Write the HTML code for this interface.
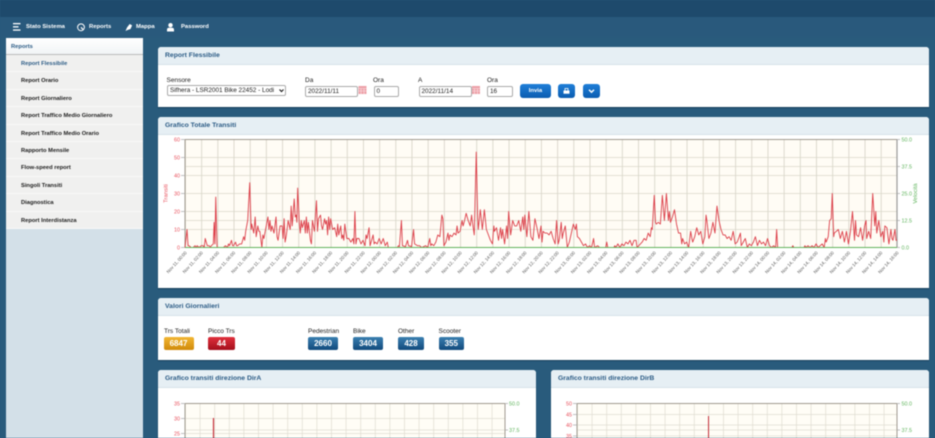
<!DOCTYPE html>
<html lang="it"><head><meta charset="utf-8"><title>Report Flessibile</title>
<style>
*{box-sizing:border-box}
html,body{margin:0;padding:0;width:935px;height:438px;overflow:hidden;background:#295b7c}
body{font-family:"Liberation Sans",sans-serif;font-size:6px;color:#222}
#w{position:relative;width:935px;height:438px;overflow:hidden;background:#295b7c;filter:blur(.4px)}
#top{position:absolute;left:0;top:0;width:935px;height:17px;background:#1e4a6c}
#nav{position:absolute;left:0;top:17px;width:935px;height:20px;background:#29597c}
.n{position:absolute;top:24px;color:#fff;font-weight:bold;font-size:5.9px;line-height:7px;white-space:nowrap}
#col{position:absolute;left:6px;top:37.5px;width:137px;height:401px;background:#d3e0e8}
#sh{height:17.5px;background:linear-gradient(#fff,#f1f4f6);border-bottom:1px solid #bbb;padding-left:5px;font-weight:bold;font-size:5.8px;line-height:19px;color:#2b5b85}
.i{height:17.4px;background:#f0f0ef;border-bottom:1px solid #f8f8f8;padding-left:15px;font-weight:bold;font-size:5.75px;line-height:19.5px;color:#1c1c1c;white-space:nowrap}
.p{position:absolute;background:#fff;border-radius:3px 3px 0 0;box-shadow:0 1px 1px #173f5c}
.h{height:18px;background:#e6eff4;border-bottom:1px solid #d6e2e8;border-radius:3px 3px 0 0;padding-left:7px;font-weight:bold;font-size:6.8px;line-height:17px;color:#2b5b85;white-space:nowrap}
.l{position:absolute;font-size:6.5px;line-height:7px;color:#222;white-space:nowrap}
.f{position:absolute;height:11px;background:#fff;border:1px solid #aaa;border-radius:2px;font-size:6.4px;line-height:9px;padding-left:2px;color:#222;white-space:nowrap}
.b{position:absolute;top:84px;height:14px;border-radius:3px;background:linear-gradient(#1f7fd8,#0a5cb0);color:#fff;font-weight:bold;font-size:5.9px;line-height:14.5px;text-align:center}
.t{position:absolute;top:337px;height:13px;border-radius:2px;color:#fff;font-weight:bold;font-size:8px;line-height:13px;text-align:center;background:linear-gradient(#3a7fb0,#114a7c)}
svg{position:absolute;left:0;top:0}
svg text{font-family:"Liberation Sans",sans-serif}
</style></head><body><div id="w">
<div id="top"></div><div id="nav"></div>
<div class="n" style="left:26px">Stato Sistema</div>
<div class="n" style="left:89px">Reports</div>
<div class="n" style="left:136px">Mappa</div>
<div class="n" style="left:181px">Password</div>

<div id="col"><div id="sh">Reports</div>
<div class="i" style="color:#2b5b85">Report Flessibile</div>
<div class="i">Report Orario</div>
<div class="i">Report Giornaliero</div>
<div class="i">Report Traffico Medio Giornaliero</div>
<div class="i">Report Traffico Medio Orario</div>
<div class="i">Rapporto Mensile</div>
<div class="i">Flow-speed report</div>
<div class="i">Singoli Transiti</div>
<div class="i">Diagnostica</div>
<div class="i">Report Interdistanza</div>
</div>

<div class="p" style="left:158px;top:47px;width:771px;height:60px"><div class="h">Report Flessibile</div></div>
<div class="p" style="left:158px;top:116.5px;width:771px;height:171.5px"><div class="h">Grafico Totale Transiti</div></div>
<div class="p" style="left:158px;top:298px;width:771px;height:62px"><div class="h">Valori Giornalieri</div></div>
<div class="p" style="left:158px;top:370px;width:378px;height:70px"><div class="h">Grafico transiti direzione DirA</div></div>
<div class="p" style="left:551px;top:370px;width:378px;height:70px"><div class="h">Grafico transiti direzione DirB</div></div>

<div class="l" style="left:166.5px;top:77px">Sensore</div>
<div class="f" style="left:167px;top:85px;width:119px">Sifhera - LSR2001 Bike 22452 - Lodi</div>
<div class="l" style="left:305px;top:77px">Da</div>
<div class="f" style="left:305px;top:85.5px;width:53px">2022/11/11</div>
<div class="l" style="left:373px;top:77px">Ora</div>
<div class="f" style="left:373.5px;top:85.5px;width:25.5px">0</div>
<div class="l" style="left:418px;top:77px">A</div>
<div class="f" style="left:418.5px;top:85.5px;width:53px">2022/11/14</div>
<div class="l" style="left:487px;top:77px">Ora</div>
<div class="f" style="left:487px;top:85.5px;width:25.5px">16</div>
<div class="b" style="left:520px;width:31px">Invia</div>
<div class="b" style="left:558px;width:17px"></div>
<div class="b" style="left:583px;width:17px"></div>

<div class="l" style="left:164px;top:327.5px">Trs Totali</div>
<div class="l" style="left:208px;top:327.5px">Picco Trs</div>
<div class="l" style="left:308px;top:327.5px">Pedestrian</div>
<div class="l" style="left:353px;top:327.5px">Bike</div>
<div class="l" style="left:398px;top:327.5px">Other</div>
<div class="l" style="left:438.5px;top:327.5px">Scooter</div>
<div class="t" style="left:163.5px;width:30px;background:linear-gradient(#f2b632,#d08a0a)">6847</div>
<div class="t" style="left:208px;width:27px;background:linear-gradient(#e0303c,#a40f1c)">44</div>
<div class="t" style="left:308px;width:30px">2660</div>
<div class="t" style="left:353px;width:30px">3404</div>
<div class="t" style="left:398px;width:26px">428</div>
<div class="t" style="left:438.5px;width:25.5px">355</div>

<svg width="935" height="438" viewBox="0 0 935 438">
<defs>
<pattern id="v" x="185" y="0" width="16.18" height="10" patternUnits="userSpaceOnUse"><rect x="0" width=".9" height="10" fill="#d9d6ca"/></pattern>
<pattern id="v2" x="185" y="0" width="14.6" height="10" patternUnits="userSpaceOnUse"><rect x="0" width=".9" height="10" fill="#e6e3d8"/></pattern>
<pattern id="v3" x="577" y="0" width="14.6" height="10" patternUnits="userSpaceOnUse"><rect x="0" width=".9" height="10" fill="#e6e3d8"/></pattern>
</defs>

<!-- nav icons -->
<g fill="#fff">
<rect x="13" y="23" width="7.5" height="1.3"/><rect x="13" y="26.2" width="5.5" height="1.3"/><rect x="13" y="29.4" width="7.5" height="1.3"/>
</g>
<circle cx="81" cy="27.3" r="3.4" fill="none" stroke="#fff" stroke-width="1"/>
<path d="M81 27.3l2.4 2.6" stroke="#fff" stroke-width="1.2"/>
<path d="M125.5 31l1.6-3.6 2.6-3.4 2.4 1.4-1.6 3.6-3 1z" fill="#fff"/>
<circle cx="170.5" cy="25.2" r="2.2" fill="#fff"/><path d="M167 31.5v-2q0-1.6 2-1.8h3q2 .2 2 1.8v2z" fill="#fff"/>

<!-- calendar icons -->
<g>
<rect x="358.5" y="86" width="8" height="8" fill="#eda0a8"/><path d="M358.5 88.5h8M358.5 91h8M361 88.5v5.5M364 88.5v5.5" stroke="#fbe4e6" stroke-width=".6"/>
<rect x="472" y="86" width="8" height="8" fill="#eda0a8"/><path d="M472 88.5h8M472 91h8M474.5 88.5v5.5M477.5 88.5v5.5" stroke="#fbe4e6" stroke-width=".6"/>
</g>

<!-- select arrow, button icons -->
<path d="M279.5 89.5l2 2 2-2" fill="none" stroke="#222" stroke-width="1.2"/>
<rect x="563.5" y="90.5" width="6" height="3.2" fill="#fff"/><rect x="565" y="88.5" width="3" height="2.4" fill="none" stroke="#fff" stroke-width=".8"/>
<path d="M589 89.8l2.5 2.5 2.5-2.5" fill="none" stroke="#fff" stroke-width="1.4"/>

<!-- main chart -->
<rect x="185" y="139.5" width="712" height="108" fill="#fffcf5"/>
<rect x="185" y="139.5" width="712" height="108" fill="url(#v)"/>
<path d="M185 157.5H897M185 175.5H897M185 193.5H897M185 211.5H897M185 229.5H897M185 166.5H897M185 220.5H897" stroke="#dad7ca" stroke-width=".8"/>
<path d="M185 139.5V247.5M185 139.5H897" stroke="#a09a90" stroke-width="1"/>
<path d="M897 139.5V247.5" stroke="#999" stroke-width="1.2"/>
<path d="M181 139.5h4M181 157.5h4M181 175.5h4M181 193.5h4M181 211.5h4M181 229.5h4M181 247.5h4M897 139.5h3M897 166.5h3M897 193.5h3M897 220.5h3M897 247.5h3" stroke="#aaa" stroke-width=".7"/>
<g transform="translate(185,247.5) scale(2.0227,-1.8)">
<polyline fill="none" stroke="#dc3f49" stroke-width=".9" vector-effect="non-scaling-stroke" stroke-linejoin="round" points="0,0 1,10 1.5,1 2,1 3,0 4,0 5,1 5.5,0 6,1 7,0 8,1 9,1 9.5,0 10,5 11,1 12,1 12.5,0 13,1 14,2 14.4,14 14.8,2 15.2,28 15.8,1 16,0 19,0 20,1 21,0 21.5,2 22,1 23,4 23.5,1 24,1 25,3 25.5,1 26,1 27,2 28,2 29,6 29.5,4 30,9 31,15 32,36 32.7,10 33,13 34,8 34.7,17 35.2,6 36,12 36.5,9 37,9 38,0 38.5,7 39,5 40,11 41,17 41.5,10 42,15 42.5,9 43,12 44,8 45,17 45.5,6 46,4 47,12 48,12 48.5,5 49,16 49.5,3 50,6 51,15 52,10 52.5,23 53,12 54,27 54.5,17 55,18 55.3,14 55.7,33 56.5,14 57,8 57.5,15 58,11 59,15 59.5,8 60,17 60.5,8 61,14 62,4 62.5,2 63,15 64,9 65,26 65.5,9 66,16 67,18 67.5,12 68,10 69,16 69.5,13 70,15 70.5,7 71,17 71.5,10 72,16 73,10 74,11 75,6 75.5,13 76,7 77,12 77.5,5 78,7 78.5,4 79,13 80,5 81,5 82,3 83,5 83.5,2 84,20 84.5,2 85,5 86,5 87,2 88,4 89,1 89.5,7 90,5 91,11 91.5,1 92,3 93,7 93.5,2 94,3 95,2 96,5 97,2 98,5 99,1 100,3 100.5,0 105,0 105.5,1 106,0.5 107,15 107.5,1 109,0.5 110,4 110.5,1 112,0.5 113,10 113.5,2 115,1 116,1 117,0 119,1 120,0 121,5 121.5,1 122,2 123,1 124,3 125,7 126,6 127,18 127.5,16 128,1 129,3 130,8 130.5,4 131,7 132,6 133,8 134,7 134.5,12 135,8 136,9 137,15 137.5,12 138,14 139,19 140,15 141,12 141.7,18 142,15 143,7 144,53 144.7,16 145,10 146,21 147,10 148,21 149,10 150,7 151,4 152,2 152.7,12 153,9 154,11 155,4 156,11 156.5,5 157,10 158,2 159,12 159.5,5 160,20 161,7 162,15 163,12 164,12 165,15 166,9 167,17 167.5,10 168,18 169,6 170,20 171,6 172,4 173,16 174,11 175,5 176,12 176.5,3 177,9 178,8 179,8 180,7 181,9 182,5 183,2 183.7,15 184.5,2 185,4 186,14 186.5,5 187,8 188,12 189,0 190,3 191,8 192,13 193,10 193.5,13 194,6 195,5 196,3 197,1 198,2 199,0 200,1 201,0 202,5 202.5,0 204,1 205,0 208,0 208.5,3 209,0 212,0 212.5,1 213,0 214,2 215,0 216,2 217,1 218,3 219,2 220,4 221,1 222,4 223,4 223.5,0 226,3 227,5 228,4 229,8 230,6 230.6,11 231,10 232,29 232.6,14 233,13 234,14 235,13 236,29 237,15 238,30 239,15 239.5,20 240,14 241,17 242,21 243,13 244,8 245,8 245.6,2 246,5 247,2 248,3 249,0 250,9 250.6,5 251,3 252,6 253,11 254,7 255,9 256,2 257,6 257.6,18 258,15 259,5 260,8 261,14 262,8 263,23 264,15 265,10 266,7 267,7 268,5 269,6 270,4 271,9 272,2 273,3 274,6 274.6,8 275,1 276,3 277,5 278,0 279,2 280,1 281,3 282,6 283,1 284,4 285,2 286,3 287,1 288,5 289,1 290,0 291,1 292,0 292.5,10 293,0 300,0 300.5,1 301,0 306,0 306.5,1 307,0 308,1 309,0 310,1 311,0 312,2 313,0 314,1 315,2 316,0 316.6,5 317,3 318,6 318.7,15 319.5,16 320,30 320.7,6 321,8 322,9 323,10 324,5 325,9 326,3 327,9 328,2 329,9 330,20 331,4 331.5,15 332,7 333,6 334,11 335,4 336,12 336.7,15 337,5 338,9 339,5 340,30 341,12 341.5,20 342,8 343,15 344,6 345,9 345.5,3 346,12 347,11 348,2 349,10 349.5,5 350,4 351,10 351.5,4 352,4"/>
</g>
<path d="M185 247.5H897" stroke="#63b35c" stroke-width="1"/>

<g font-size="5.4" fill="#e8505c" text-anchor="end">
<text x="180" y="141.5">60</text><text x="180" y="159.5">50</text><text x="180" y="177.5">40</text><text x="180" y="195.5">30</text><text x="180" y="213.5">20</text><text x="180" y="231.5">10</text><text x="180" y="249.5">0</text>
</g>
<g font-size="5.4" fill="#5fb45c">
<text x="901.5" y="141.5">50.0</text><text x="901.5" y="168.5">37.5</text><text x="901.5" y="195.5">25.0</text><text x="901.5" y="222.5">12.5</text><text x="901.5" y="249.5">0.0</text>
<text transform="translate(917,193.5) rotate(-90)" text-anchor="middle" font-size="5.8">Velocità</text>
</g>
<text transform="translate(167.5,193.5) rotate(-90)" text-anchor="middle" font-size="5.8" fill="#e8505c">Transiti</text>

<g font-size="4.5" fill="#555" text-anchor="end">
<text transform="translate(187,253) rotate(-48)">Nov 11, 00:00</text><text transform="translate(203.2,253) rotate(-48)">Nov 11, 02:00</text><text transform="translate(219.4,253) rotate(-48)">Nov 11, 04:00</text><text transform="translate(235.5,253) rotate(-48)">Nov 11, 06:00</text><text transform="translate(251.7,253) rotate(-48)">Nov 11, 08:00</text><text transform="translate(267.9,253) rotate(-48)">Nov 11, 10:00</text><text transform="translate(284.1,253) rotate(-48)">Nov 11, 12:00</text><text transform="translate(300.3,253) rotate(-48)">Nov 11, 14:00</text><text transform="translate(316.4,253) rotate(-48)">Nov 11, 16:00</text><text transform="translate(332.6,253) rotate(-48)">Nov 11, 18:00</text><text transform="translate(348.8,253) rotate(-48)">Nov 11, 20:00</text><text transform="translate(365,253) rotate(-48)">Nov 11, 22:00</text>
<text transform="translate(381.2,253) rotate(-48)">Nov 12, 00:00</text><text transform="translate(397.3,253) rotate(-48)">Nov 12, 02:00</text><text transform="translate(413.5,253) rotate(-48)">Nov 12, 04:00</text><text transform="translate(429.7,253) rotate(-48)">Nov 12, 06:00</text><text transform="translate(445.9,253) rotate(-48)">Nov 12, 08:00</text><text transform="translate(462.1,253) rotate(-48)">Nov 12, 10:00</text><text transform="translate(478.2,253) rotate(-48)">Nov 12, 12:00</text><text transform="translate(494.4,253) rotate(-48)">Nov 12, 14:00</text><text transform="translate(510.6,253) rotate(-48)">Nov 12, 16:00</text><text transform="translate(526.8,253) rotate(-48)">Nov 12, 18:00</text><text transform="translate(543,253) rotate(-48)">Nov 12, 20:00</text><text transform="translate(559.1,253) rotate(-48)">Nov 12, 22:00</text>
<text transform="translate(575.3,253) rotate(-48)">Nov 13, 00:00</text><text transform="translate(591.5,253) rotate(-48)">Nov 13, 02:00</text><text transform="translate(607.7,253) rotate(-48)">Nov 13, 04:00</text><text transform="translate(623.9,253) rotate(-48)">Nov 13, 06:00</text><text transform="translate(640,253) rotate(-48)">Nov 13, 08:00</text><text transform="translate(656.2,253) rotate(-48)">Nov 13, 10:00</text><text transform="translate(672.4,253) rotate(-48)">Nov 13, 12:00</text><text transform="translate(688.6,253) rotate(-48)">Nov 13, 14:00</text><text transform="translate(704.8,253) rotate(-48)">Nov 13, 16:00</text><text transform="translate(720.9,253) rotate(-48)">Nov 13, 18:00</text><text transform="translate(737.1,253) rotate(-48)">Nov 13, 20:00</text><text transform="translate(753.3,253) rotate(-48)">Nov 13, 22:00</text>
<text transform="translate(769.5,253) rotate(-48)">Nov 14, 00:00</text><text transform="translate(785.7,253) rotate(-48)">Nov 14, 02:00</text><text transform="translate(801.8,253) rotate(-48)">Nov 14, 04:00</text><text transform="translate(818,253) rotate(-48)">Nov 14, 06:00</text><text transform="translate(834.2,253) rotate(-48)">Nov 14, 08:00</text><text transform="translate(850.4,253) rotate(-48)">Nov 14, 10:00</text><text transform="translate(866.6,253) rotate(-48)">Nov 14, 12:00</text><text transform="translate(882.7,253) rotate(-48)">Nov 14, 14:00</text><text transform="translate(898.9,253) rotate(-48)">Nov 14, 16:00</text>
</g>

<!-- chart A -->
<rect x="185" y="403.5" width="320" height="35" fill="#fffdf6"/>
<rect x="185" y="403.5" width="320" height="35" fill="url(#v2)"/>
<path d="M185 418.5H505M185 433.5H505M185 430H505" stroke="#e0ddd2" stroke-width=".8"/>
<path d="M185 403.5H505M185 403.5V438M505 403.5V438" stroke="#a09a90" stroke-width="1"/>
<path d="M181 403.5h4M181 418.5h4M181 433.5h4M505 403.5h3M505 430h3" stroke="#aaa" stroke-width=".7"/>
<path d="M213.5 418V438" stroke="#c8333e" stroke-width="1.2"/>
<g font-size="5.4" fill="#e8505c" text-anchor="end"><text x="180" y="405.5">35</text><text x="180" y="420.5">30</text><text x="180" y="435.5">25</text></g>
<g font-size="5.4" fill="#5fb45c"><text x="509" y="405.5">50.0</text><text x="509" y="432">37.5</text></g>

<!-- chart B -->
<rect x="577" y="403.5" width="320" height="35" fill="#fffdf6"/>
<rect x="577" y="403.5" width="320" height="35" fill="url(#v3)"/>
<path d="M577 414.5H897M577 425H897M577 436H897M577 430H897" stroke="#e0ddd2" stroke-width=".8"/>
<path d="M577 403.5H897M577 403.5V438M897 403.5V438" stroke="#a09a90" stroke-width="1"/>
<path d="M573 403.5h4M573 414.5h4M573 425h4M573 436h4M897 403.5h3M897 430h3" stroke="#aaa" stroke-width=".7"/>
<path d="M708.5 416V438" stroke="#c8333e" stroke-width="1"/>
<g font-size="5.4" fill="#e8505c" text-anchor="end"><text x="572" y="405.5">50</text><text x="572" y="416.5">45</text><text x="572" y="427">40</text><text x="572" y="438">35</text></g>
<g font-size="5.4" fill="#5fb45c"><text x="901.5" y="405.5">50.0</text><text x="901.5" y="432">37.5</text></g>
</svg>
</div></body></html>
